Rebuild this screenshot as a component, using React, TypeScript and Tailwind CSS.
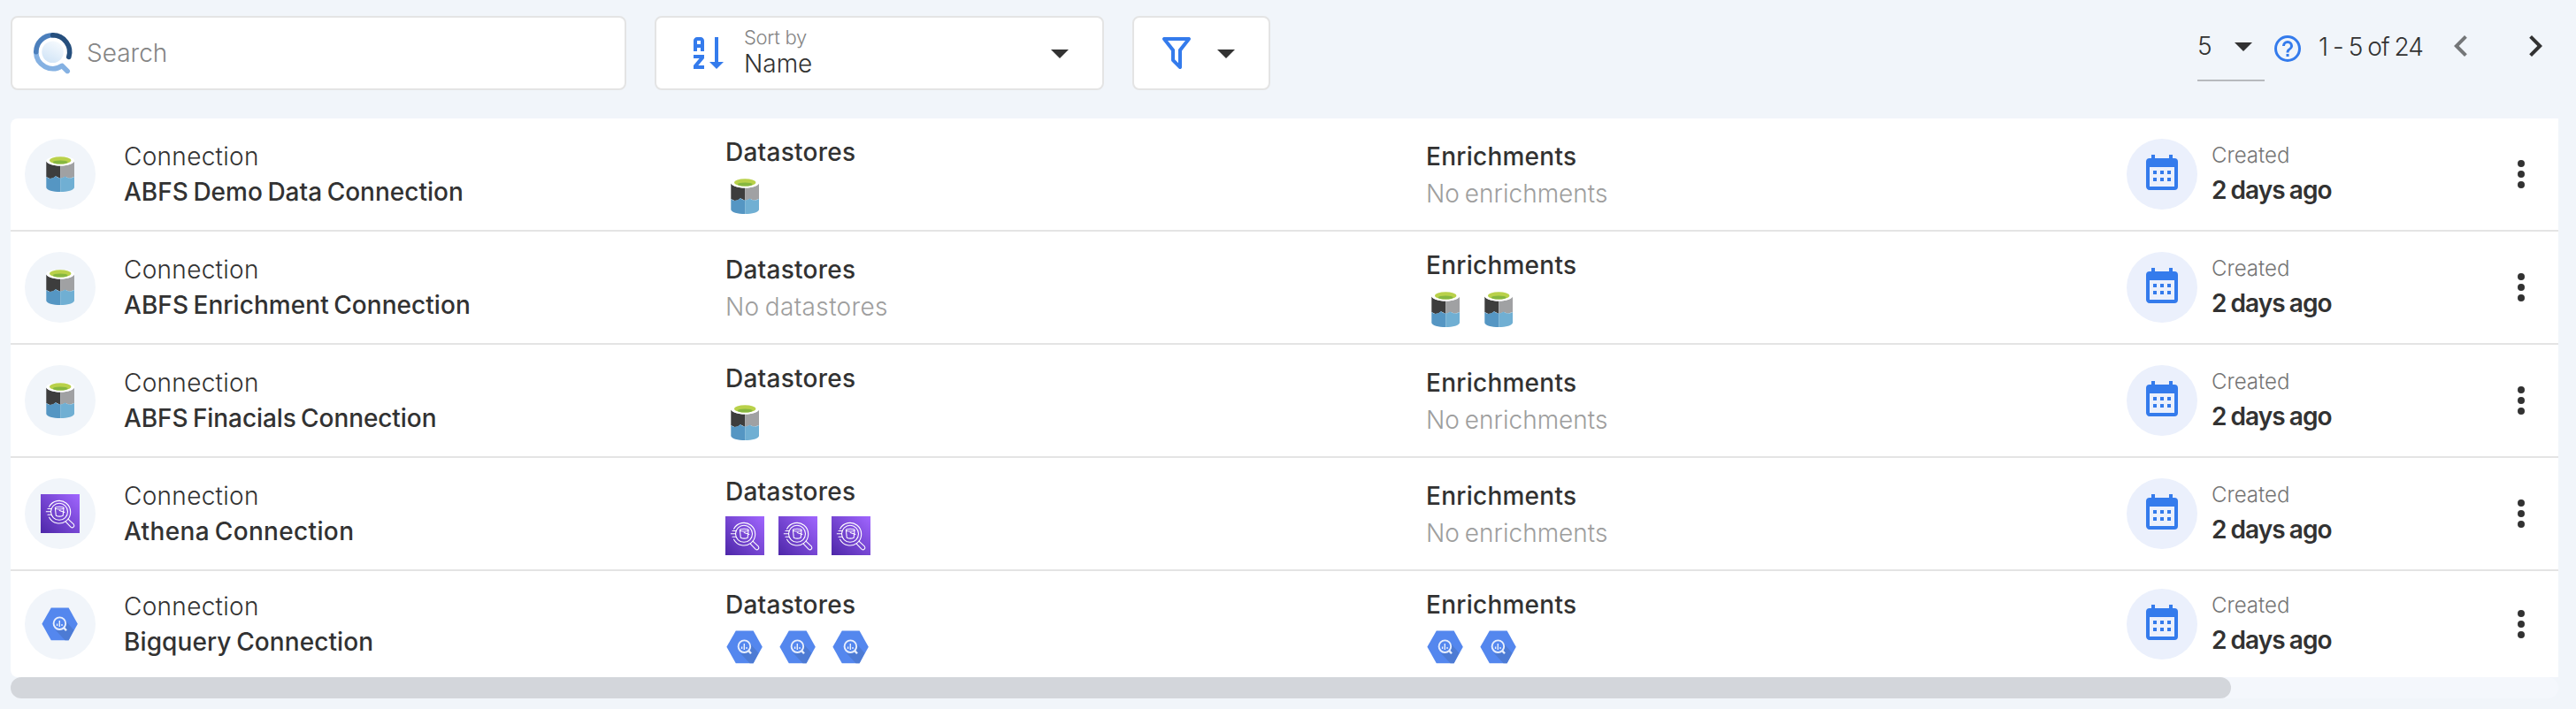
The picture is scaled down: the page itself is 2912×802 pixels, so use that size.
import type { ReactNode } from 'react';

type Kind = 'abfs' | 'athena' | 'bigquery';

type Connection = {
  name: string;
  nameClass: string;
  kind: Kind;
  datastores: number;
  enrichments: number;
};

const connections: Connection[] = [
  { name: 'ABFS Demo Data Connection', nameClass: 'tracking-[0.02px]', kind: 'abfs', datastores: 1, enrichments: 0 },
  { name: 'ABFS Enrichment Connection', nameClass: 'tracking-[0.05px]', kind: 'abfs', datastores: 0, enrichments: 2 },
  { name: 'ABFS Finacials Connection', nameClass: 'tracking-[-0.08px]', kind: 'abfs', datastores: 1, enrichments: 0 },
  { name: 'Athena Connection', nameClass: 'tracking-[0.35px]', kind: 'athena', datastores: 3, enrichments: 0 },
  { name: 'Bigquery Connection', nameClass: 'tracking-[0.1px]', kind: 'bigquery', datastores: 3, enrichments: 2 },
];

const paths = {
  sort: 'M19 17H22L18 21L14 17H17V3H19M11 13V15L7.67 19H11V21H5V19L8.33 15H5V13M9 3H7C5.9 3 5 3.9 5 5V11H7V9H9V11H11V5C11 3.9 10.11 3 9 3M9 7H7V5H9Z',
  filter:
    'M15,19.88C15.04,20.18 14.94,20.5 14.71,20.71C14.32,21.1 13.69,21.1 13.3,20.71L9.29,16.7C9.06,16.47 8.96,16.16 9,15.87V10.75L4.21,4.62C3.87,4.19 3.95,3.56 4.38,3.22C4.57,3.08 4.78,3 5,3H19C19.22,3 19.43,3.08 19.62,3.22C20.05,3.56 20.13,4.19 19.79,4.62L15,10.75V19.88M7.04,5L11,10.06V15.58L13,17.58V10.05L16.96,5H7.04Z',
  caret: 'M7,10L12,15L17,10H7Z',
  help: 'M11,18H13V16H11V18M12,2A10,10 0 0,0 2,12A10,10 0 0,0 12,22A10,10 0 0,0 22,12A10,10 0 0,0 12,2M12,20C7.59,20 4,16.41 4,12C4,7.59 7.59,4 12,4C16.41,4 20,7.59 20,12C20,16.41 16.41,20 12,20M12,6A4,4 0 0,0 8,10H10A2,2 0 0,1 12,8A2,2 0 0,1 14,10C14,12 11,11.75 11,15H13C13,12.75 16,12.5 16,10A4,4 0 0,0 12,6Z',
  left: 'M15.41,16.58L10.83,12L15.41,7.41L14,6L8,12L14,18L15.41,16.58Z',
  right: 'M8.59,16.58L13.17,12L8.59,7.41L10,6L16,12L10,18L8.59,16.58Z',
  calendar:
    'M9,10V12H7V10H9M13,10V12H11V10H13M17,10V12H15V10H17M19,3A2,2 0 0,1 21,5V19A2,2 0 0,1 19,21H5C3.89,21 3,20.1 3,19V5A2,2 0 0,1 5,3H6V1H8V3H16V1H18V3H19M19,19V8H5V19H19M9,14V16H7V14H9M13,14V16H11V14H13M17,14V16H15V14H17Z',
  dots: 'M12,16A2,2 0 0,1 14,18A2,2 0 0,1 12,20A2,2 0 0,1 10,18A2,2 0 0,1 12,16M12,10A2,2 0 0,1 14,12A2,2 0 0,1 12,14A2,2 0 0,1 10,12A2,2 0 0,1 12,10M12,4A2,2 0 0,1 14,6A2,2 0 0,1 12,8A2,2 0 0,1 10,6A2,2 0 0,1 12,4Z',
};

function Icon({ d, className = 'size-12' }: { d: string; className?: string }) {
  return (
    <svg viewBox="0 0 24 24" className={`shrink-0 ${className}`} fill="currentColor" aria-hidden="true">
      <path d={d} />
    </svg>
  );
}

function SearchLogo() {
  return (
    <svg viewBox="0 0 48 50" className="h-[50px] w-12 shrink-0" fill="none" aria-hidden="true">
      <defs>
        <linearGradient id="lens" x1="0.2" y1="1" x2="0.7" y2="0">
          <stop offset="0" stopColor="#cfe3f6" />
          <stop offset="1" stopColor="#f6fafe" />
        </linearGradient>
      </defs>
      <circle cx="23.6" cy="23.8" r="12.3" fill="url(#lens)" />
      <g strokeWidth="5.6" strokeLinecap="round" strokeLinejoin="round">
        <path d="M4.7 24A19 19 0 0 0 34.2 39.4L40.2 45.4" stroke="#85b1e2" />
        <path d="M4.8 23.6A19 19 0 0 1 23.7 4.8" stroke="#4b7fbc" />
        <path d="M23.7 4.8A19 19 0 0 1 41.8 29.4" stroke="#264f7d" />
      </g>
    </svg>
  );
}

function AbfsIcon() {
  return (
    <svg viewBox="0 0 44 44" className="size-11" aria-hidden="true">
      <path d="M6.3 7.5C8 10.5 15 12.6 22.2 12.6V27L19.6 25.6L17 24.2L14 26.6L10.4 26.9L6.3 25Z" fill="#3d3d3d" />
      <path d="M38 7.5C36.3 10.5 29.4 12.6 22.2 12.6V27L28 25L32.5 26.8L38 25Z" fill="#a0a1a3" />
      <path d="M6.3 25Q9.5 28 13 26.6Q15.5 25.6 17 24Q19 26.6 22.2 26.6V42C14 42 6.3 40 6.3 37Z" fill="#5596c3" />
      <path d="M22.2 26.6Q25 26.5 27.6 24.6Q32 28.4 38 25V37C38 40 30 42 22.2 42Z" fill="#70afd3" />
      <path d="M6.3 6.8C6.3 4 13 2 22.2 2S38 4 38 6.8C38 10 31 12.6 22.2 12.6S6.3 10 6.3 6.8Z" fill="#fff" />
      <ellipse cx="22.2" cy="6.4" rx="12.2" ry="4.2" fill="#b9d14a" />
      <ellipse cx="22.2" cy="8.5" rx="8.6" ry="2.1" fill="#86b740" />
    </svg>
  );
}

function AthenaIcon() {
  return (
    <svg viewBox="0 0 44 44" className="size-11" fill="none" aria-hidden="true">
      <defs>
        <linearGradient id="violet" x1="0" y1="1" x2="1" y2="0">
          <stop offset="0" stopColor="#4d27a8" />
          <stop offset="1" stopColor="#a166ff" />
        </linearGradient>
      </defs>
      <rect width="44" height="44" fill="url(#violet)" />
      <g stroke="#fff" strokeWidth="1.1" strokeLinecap="round" strokeLinejoin="round">
        <path d="M9.6 14.2A12.8 12.8 0 1 1 9.6 26.2" />
        <circle cx="21" cy="19.8" r="9.5" />
        <path d="M8 16.5H12M6.3 19.8H11.4M8 23.2H12" />
        <path d="M31 28.2L37.4 34.2A2.3 2.3 0 0 1 34.2 37.4L28.2 31.2" />
        <ellipse cx="21.2" cy="15.6" rx="4.8" ry="1.4" />
        <path d="M16.4 15.8L17.3 24.2Q21.3 26 25.2 24.2L26 15.8M21.2 18.6L26.8 20.6" />
      </g>
    </svg>
  );
}

function BigqueryIcon() {
  return (
    <svg viewBox="0 0 44 40" className="h-10 w-11" fill="none" aria-hidden="true">
      <path d="M11.8 1.4H31.6L41.8 19.8L31.6 38.2H11.8L1.4 19.8Z" fill="#5487ee" />
      <path d="M27.2 15L37.4 26.8L31.6 38.2H27.5L17 27L21 27.2L28 24Z" fill="#4d7bd4" />
      <circle cx="21.4" cy="19.2" r="6.8" fill="#5487ee" stroke="#e8effc" strokeWidth="1.9" />
      <path d="M26.4 24.4L29 27.2" stroke="#e8effc" strokeWidth="2.4" />
      <path d="M18.6 19.4V22M21.3 16V23M24 20V22" stroke="#e8effc" strokeWidth="1.4" />
    </svg>
  );
}

function KindIcon({ kind }: { kind: Kind }) {
  if (kind === 'abfs') return <AbfsIcon />;
  if (kind === 'athena') return <AthenaIcon />;
  return <BigqueryIcon />;
}

type LinkedProps = { title: string; empty: string; emptyClass: string; count: number; kind: Kind };

function Linked({ title, empty, emptyClass, count, kind }: LinkedProps) {
  if (count === 0) {
    return (
      <div className="-ml-0.5 pt-[22px] leading-[42px]">
        <p className="font-medium tracking-[0.25px]">{title}</p>
        <p className={`font-[350] text-[#9e9e9e] [word-spacing:-2px] ${emptyClass}`}>{empty}</p>
      </div>
    );
  }
  return (
    <div className="-ml-0.5 pt-[18px]">
      <p className="leading-10 font-medium tracking-[0.25px]">{title}</p>
      <div className="flex gap-4 pt-2">
        {Array.from({ length: count }, (_, i) => (
          <KindIcon key={i} kind={kind} />
        ))}
      </div>
    </div>
  );
}

function Row({ item }: { item: Connection }) {
  return (
    <li className="grid h-32 grid-cols-[810px_792px_790px_1fr_66px] border-b-2 border-[#e4e4e4] last:h-[120px] last:border-b-0">
      <div className="flex items-center gap-8 pl-4">
        <div className="flex size-20 items-center justify-center rounded-full bg-[#f1f5fa]">
          <KindIcon kind={item.kind} />
        </div>
        <div className="leading-10">
          <p className="font-[350] tracking-[0.3px]">Connection</p>
          <p className={`font-medium [word-spacing:-2px] ${item.nameClass}`}>{item.name}</p>
        </div>
      </div>
      <Linked title="Datastores" empty="No datastores" emptyClass="tracking-[0.35px]" count={item.datastores} kind={item.kind} />
      <Linked title="Enrichments" empty="No enrichments" emptyClass="tracking-[0.02px]" count={item.enrichments} kind={item.kind} />
      <div className="flex items-center gap-4">
        <div className="flex size-20 items-center justify-center rounded-full bg-[#ebf0fc] text-[#347bec]">
          <Icon d={paths.calendar} />
        </div>
        <div className="pb-1">
          <p className="text-2xl leading-10 font-[350] text-[#757575]">Created</p>
          <p className="leading-[38px] font-semibold tracking-[-0.95px] [word-spacing:-1px]">2 days ago</p>
        </div>
      </div>
      <button className="flex items-center text-[#323232]" aria-label="Actions">
        <Icon d={paths.dots} />
      </button>
    </li>
  );
}

function Box({ className, children }: { className: string; children: ReactNode }) {
  return <div className={`flex h-[84px] items-center rounded-lg border-2 border-[#e4e4e4] bg-white ${className}`}>{children}</div>;
}

export default function App() {
  return (
    <div className="h-[802px] w-[2912px] overflow-hidden bg-[#f1f5fa] pt-[18px] pl-3 font-['Inter','Liberation_Sans',sans-serif] text-[28px] text-[#323232]">
      <header className="flex h-[116px] items-start gap-8 pr-[22px]">
        <Box className="w-[696px] gap-3.5 pl-[22px]">
          <SearchLogo />
          <span className="font-[350] text-[#858585]">Search</span>
        </Box>
        <Box className="w-[508px] pr-6 pl-8">
          <span className="flex text-[#347bec]">
            <Icon d={paths.sort} />
          </span>
          <div className="flex-1 pb-1 pl-[19px]">
            <p className="text-[22px] leading-7 font-[350] tracking-[-0.3px] text-[#858585]">Sort by</p>
            <p className="leading-8 font-[350]">Name</p>
          </div>
          <Icon d={paths.caret} />
        </Box>
        <Box className="w-[156px] gap-2 pl-6">
          <span className="flex text-[#347bec]">
            <Icon d={paths.filter} />
          </span>
          <Icon d={paths.caret} />
        </Box>
        <div className="mt-2.5 ml-auto flex items-start font-[350]">
          <div className="flex h-16 w-[76px] items-start justify-between border-b-2 border-[#b7babe] leading-[48px]">
            <span>5</span>
            <Icon d={paths.caret} />
          </div>
          <span className="mt-[9px] ml-2 flex text-[#347bec]">
            <Icon d={paths.help} className="size-9" />
          </span>
          <span className="ml-[17px] w-[137px] leading-[50px] tracking-[-0.95px] whitespace-nowrap [word-spacing:-1px]">1 - 5 of 24</span>
          <span className="flex text-[#747678]">
            <Icon d={paths.left} />
          </span>
          <span className="ml-9 flex">
            <Icon d={paths.right} />
          </span>
        </div>
      </header>
      <ul className="w-[2880px] rounded-l-lg bg-white">
        {connections.map((item) => (
          <Row key={item.name} item={item} />
        ))}
      </ul>
      <div className="h-6 w-[2880px] rounded-full bg-[#f4f7fc]">
        <div className="h-6 w-[2510px] rounded-full bg-[#d3d6db]" />
      </div>
    </div>
  );
}
